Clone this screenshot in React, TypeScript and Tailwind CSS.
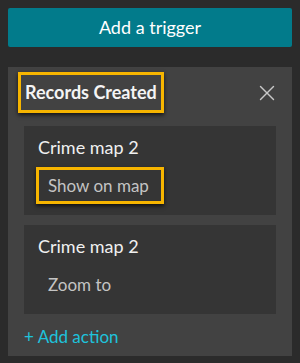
import { X } from "lucide-react";

const font = { fontFamily: "Lato, 'Noto Sans', sans-serif" };

function ActionCard({ title, action, highlight }: { title: string; action: string; highlight?: boolean }) {
  return (
    <div className="bg-[#353535] pl-[12px] pt-[10px] pb-[11px]">
      <div className="pl-[2px] text-[18px] leading-[22px] text-[#f0f0f0]">{title}</div>
      <div
        className={
          "mt-[9px] w-[128px] h-[37px] flex items-center px-[9px] border-[3px] text-[17px] text-[#c4c4c4] " +
          (highlight ? "border-[#f7b500] shadow-[0_2px_4px_rgba(0,0,0,0.7)]" : "border-transparent")
        }
      >
        {action}
      </div>
    </div>
  );
}

export default function App() {
  return (
    <div className="w-[300px] h-[363px] bg-[#2b2b2b] p-2" style={font}>
      <button className="w-full h-[39px] bg-[#027b8b] rounded-[2px] text-white text-[18px] flex items-center justify-center">
        Add a trigger
      </button>

      <div className="mt-[20px] bg-[#424242] h-[289px] flex flex-col">
        <div className="flex items-center justify-between pl-[10px] pr-[12px] pt-[5px]">
          <div className="h-[41px] flex items-center px-[4px] border-[3px] border-[#f7b500] shadow-[0_2px_4px_rgba(0,0,0,0.7)] text-[18px] font-bold text-[#f4f4f4]">
            Records Created
          </div>
          <X size={26} strokeWidth={1.3} className="text-[#c8c8c8]" />
        </div>

        <div className="px-4 mt-[13px] flex flex-col gap-[10px]">
          <ActionCard title="Crime map 2" action="Show on map" highlight />
          <ActionCard title="Crime map 2" action="Zoom to" />
        </div>

        <div className="px-4 mt-[12px] text-[17px] text-[#1ec2dc] leading-[22px]">+ Add action</div>
      </div>
    </div>
  );
}
